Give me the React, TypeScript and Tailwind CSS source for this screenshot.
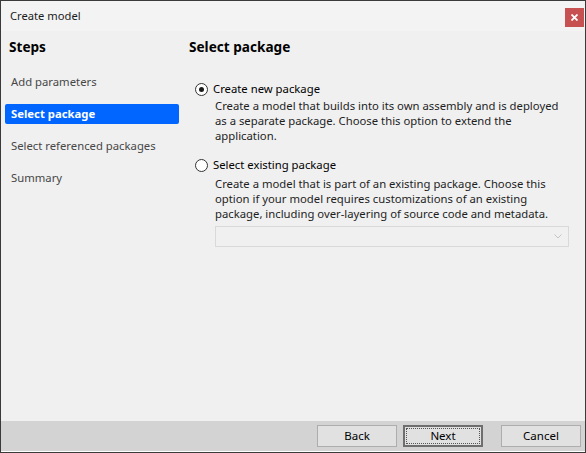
import React, { useState } from 'react';

const steps = ['Add parameters', 'Select package', 'Select referenced packages', 'Summary'];

const Radio: React.FC<{ checked: boolean; onClick: () => void; label: string }> = ({ checked, onClick, label }) => (
    <button onClick={onClick} className="flex items-center h-[18px] pl-[6px] text-left">
        <span className="w-[13px] h-[13px] rounded-full border border-[#333333] bg-white flex items-center justify-center shrink-0">
            {checked && <span className="w-[5px] h-[5px] rounded-full bg-[#1a1a1a]" />}
        </span>
        <span className="ml-[5px] text-[11.3px] text-black">{label}</span>
    </button>
);

const FooterButton: React.FC<{ label: string; focused?: boolean; className?: string }> = ({ label, focused, className }) => (
    <button
        className={
            focused
                ? 'w-[80px] h-[22px] bg-[#e1e1e1] border-2 border-[#6e6e6e] flex items-center justify-center p-[1px] ' + (className ?? '')
                : 'w-[80px] h-[22px] bg-[#e1e1e1] border border-[#adadad] flex items-center justify-center ' + (className ?? '')
        }
    >
        {focused ? (
            <span className="w-full h-full border border-dotted border-[#555555] flex items-center justify-center text-[11.5px] text-black">{label}</span>
        ) : (
            <span className="text-[11.5px] text-black">{label}</span>
        )}
    </button>
);

const App: React.FC = () => {
    const [existing, setExisting] = useState(false);

    return (
        <div className="w-[586px] h-[453px] border border-[#3a3a3a] flex flex-col bg-[#f0f0f0] font-['Noto_Sans','Open_Sans',sans-serif] overflow-hidden">
            {/* title bar */}
            <div className="h-[30px] shrink-0 bg-[#f3f3f3] flex items-center justify-between pl-[9px] pr-[1px]">
                <span className="text-[11.2px] text-[#1b1b1b]">Create model</span>
                <button className="w-[19px] h-[19px] mt-[3px] bg-[#c75050] flex items-center justify-center">
                    <svg width="7" height="7" viewBox="0 0 7 7">
                        <path d="M0.5 0.5 L6.5 6.5 M6.5 0.5 L0.5 6.5" stroke="white" strokeWidth="1.8" />
                    </svg>
                </button>
            </div>

            {/* body */}
            <div className="flex-1 flex">
                <div className="w-[188px] shrink-0 flex flex-col pt-[7px]">
                    <h2 className="pl-[8px] h-[18px] leading-[18px] text-[13.6px] font-bold text-black">Steps</h2>
                    <div className="mt-[16px] flex flex-col gap-[12px]">
                        {steps.map((s) => (
                            <div
                                key={s}
                                className={
                                    s === 'Select package'
                                        ? 'ml-[4px] w-[174px] h-[20px] rounded-[2px] bg-[#0066ff] text-white font-bold pl-[6px] flex items-center text-[11.3px]'
                                        : 'ml-[4px] w-[174px] h-[20px] pl-[6px] flex items-center text-[11.3px] text-[#474747]'
                                }
                            >
                                {s}
                            </div>
                        ))}
                    </div>
                </div>

                <div className="flex-1 flex flex-col pt-[7px]">
                    <h2 className="h-[18px] leading-[18px] text-[13.6px] font-bold text-black">Select package</h2>
                    <div className="mt-[24px] flex flex-col">
                        <Radio checked={!existing} onClick={() => setExisting(false)} label="Create new package" />
                        <p className="pl-[26px] text-[11.3px] leading-[15px] text-[#1e1e1e]">
                            Create a model that builds into its own assembly and is deployed<br />
                            as a separate package. Choose this option to extend the<br />
                            application.
                        </p>
                        <div className="mt-[13px]">
                            <Radio checked={existing} onClick={() => setExisting(true)} label="Select existing package" />
                        </div>
                        <p className="mt-[2px] pl-[26px] text-[11.3px] leading-[15px] text-[#1e1e1e]">
                            Create a model that is part of an existing package. Choose this<br />
                            option if your model requires customizations of an existing<br />
                            package, including over-layering of source code and metadata.
                        </p>
                        <div className="mt-[5px] ml-[26px] w-[354px] h-[21px] border border-[#d9d9d9] bg-[#f0f0f0] flex items-center justify-end pr-[6px]">
                            <svg width="8" height="5" viewBox="0 0 8 5">
                                <path d="M0.5 0.5 L4 4 L7.5 0.5" fill="none" stroke="#c4c4c4" strokeWidth="1" />
                            </svg>
                        </div>
                    </div>
                </div>
            </div>

            {/* footer */}
            <div className="h-[31px] shrink-0 bg-[#d3d3d3] border-b border-white flex items-center justify-end pr-[4px] pb-[1px]">
                <FooterButton label="Back" />
                <FooterButton label="Next" focused className="ml-[6px]" />
                <FooterButton label="Cancel" className="ml-[18px]" />
            </div>
        </div>
    );
};

export default App;
